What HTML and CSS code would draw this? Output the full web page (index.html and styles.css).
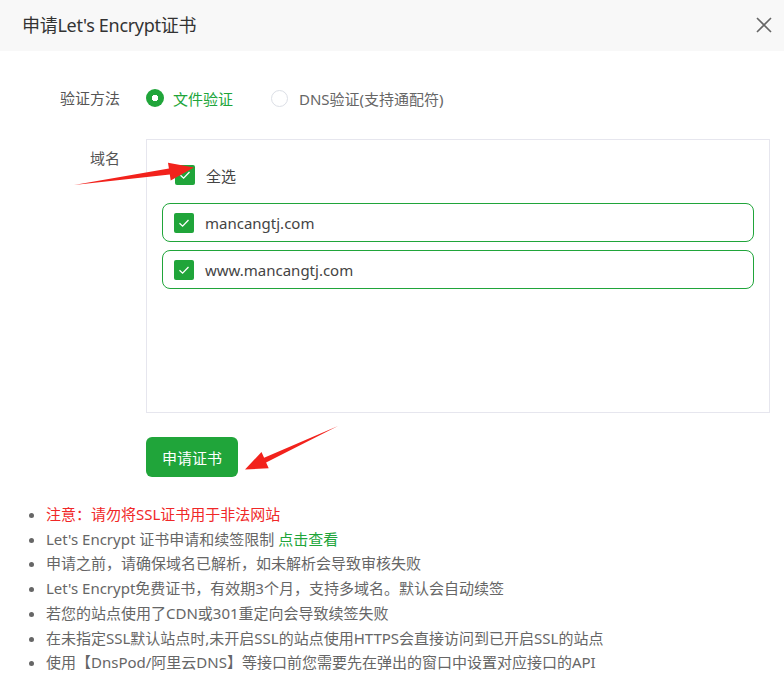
FILE: index.html
```html
<!DOCTYPE html>
<html>
    <head>
        <title>申请Let's Encrypt证书</title>
        <meta charset="UTF-8"/>
        <link rel="stylesheet" href="styles.css">
    </head>
    <body>
        <div class="dlg">
            <div class="dlg-head">
                <span class="dlg-title">申请Let's Encrypt证书</span>
                <svg class="dlg-close" width="16" height="16" viewBox="0 0 16 16">
                    <path d="M1 1 L15 15 M15 1 L1 15" stroke="#666" stroke-width="1.6" fill="none"/>
                </svg>
            </div>

            <div class="dlg-body">
                <div class="row">
                    <div class="row-label">验证方法</div>
                    <div class="row-ctrl radios">
                        <span class="radio on"><i></i>文件验证</span>
                        <span class="radio"><i></i>DNS验证(支持通配符)</span>
                    </div>
                </div>

                <div class="row row-domain">
                    <div class="row-label">域名</div>
                    <div class="row-ctrl">
                        <div class="domains">
                            <div class="dom-all">
                                <span class="chk"><svg width="20" height="20" viewBox="0 0 20 20"><path d="M5.5 10.2 L8.6 13.2 L14.5 7" stroke="#fff" stroke-width="1.3" fill="none"/></svg></span>
                                全选
                            </div>
                            <div class="dom-item">
                                <span class="chk"><svg width="20" height="20" viewBox="0 0 20 20"><path d="M5.5 10.2 L8.6 13.2 L14.5 7" stroke="#fff" stroke-width="1.3" fill="none"/></svg></span>
                                mancangtj.com
                            </div>
                            <div class="dom-item">
                                <span class="chk"><svg width="20" height="20" viewBox="0 0 20 20"><path d="M5.5 10.2 L8.6 13.2 L14.5 7" stroke="#fff" stroke-width="1.3" fill="none"/></svg></span>
                                www.mancangtj.com
                            </div>
                        </div>
                    </div>
                </div>

                <div class="row row-btn">
                    <div class="row-label"></div>
                    <div class="row-ctrl">
                        <button class="btn-green">申请证书</button>
                    </div>
                </div>

                <ul class="tips">
                    <li class="warn">注意：请勿将SSL证书用于非法网站</li>
                    <li>Let's Encrypt 证书申请和续签限制 <a href="#">点击查看</a></li>
                    <li>申请之前，请确保域名已解析，如未解析会导致审核失败</li>
                    <li>Let's Encrypt免费证书，有效期3个月，支持多域名。默认会自动续签</li>
                    <li>若您的站点使用了CDN或301重定向会导致续签失败</li>
                    <li>在未指定SSL默认站点时,未开启SSL的站点使用HTTPS会直接访问到已开启SSL的站点</li>
                    <li>使用【DnsPod/阿里云DNS】等接口前您需要先在弹出的窗口中设置对应接口的API</li>
                </ul>
            </div>

            <!-- annotation arrows drawn on top of the dialog -->
            <svg class="marks" width="784" height="697" viewBox="0 0 784 697">
                <polygon fill="#f2221c" points="74,185 168.9,168.6 168,162.7 194,167.5 170.7,180.5 169.8,174.6"/>
                <polygon fill="#f2221c" points="338,426 264.1,457.8 261.5,451.9 245,469.5 268.7,468.3 266.1,462.4"/>
            </svg>
        </div>
    </body>
</html>
```

FILE: styles.css
```css
body{
    margin: 0;
    background: #fff;
    font-family: "Noto Sans", "Noto Sans CJK SC", sans-serif;
    font-size: 15px;
    color: #666;
}

.dlg{
    position: relative;
    width: 784px;
    height: 697px;
    overflow: hidden;
}

.dlg-head{
    height: 51px;
    background: #f8f8f8;
    display: flex;
    align-items: center;
    justify-content: space-between;
    padding: 0 12px 0 22px;
}
.dlg-title{
    font-size: 18px;
    color: #333;
    letter-spacing: -0.3px;
    margin-top: -3px;
}
.dlg-close{
    margin-top: -2px;
}

.dlg-body{
    padding-top: 30px;
}

.row{
    display: flex;
}
.row-label{
    width: 120px;
    flex: none;
    text-align: right;
    padding-right: 26px;
    color: #555;
    line-height: 34px;
}
.row-ctrl{
    flex: none;
    width: 624px;
}

.radios{
    display: flex;
    align-items: center;
    height: 34px;
}
.radio{
    display: inline-flex;
    align-items: center;
    gap: 11px;
    margin-right: 38px;
    color: #666;
}
.radio i{
    width: 15px;
    height: 15px;
    border: 1px solid #dcdfe6;
    border-radius: 50%;
    box-sizing: content-box;
}
.radio.on{
    color: #20a53a;
    gap: 9px;
}
.radio.on i{
    width: 18px;
    height: 18px;
    border: none;
    background: #20a53a radial-gradient(circle, #fff 0 3px, transparent 3.5px);
}

.row-domain{
    margin-top: 24px;
}
.row-domain .row-label{
    line-height: 20px;
    padding-top: 9px;
}
.domains{
    height: 274px;
    box-sizing: border-box;
    border: 1px solid #e6e6ee;
    padding: 15px;
}
.dom-all,
.dom-item{
    display: flex;
    align-items: center;
    gap: 11px;
    color: #444;
}
.dom-all{
    height: 40px;
    padding-left: 13px;
    margin-bottom: 8px;
}
.dom-item{
    height: 39px;
    box-sizing: border-box;
    border: 1px solid #20a53a;
    border-radius: 8px;
    padding-left: 11px;
    margin-bottom: 8px;
}
.chk{
    width: 20px;
    height: 20px;
    border-radius: 2px;
    background: #20a53a;
    display: block;
}
.chk svg{
    display: block;
}

.row-btn{
    margin-top: 24px;
}
.btn-green{
    width: 92px;
    height: 40px;
    border: none;
    border-radius: 6px;
    background: #20a53a;
    color: #fff;
    font-family: inherit;
    font-size: 15px;
    padding: 0;
}

.tips{
    margin: 25px 0 0 0;
    padding-left: 46px;
    line-height: 24.7px;
    color: #666;
}
.tips li::marker{
    color: #666;
}
.tips .warn{
    color: #f02828;
}
.tips a{
    color: #20a53a;
    text-decoration: none;
}

.marks{
    position: absolute;
    left: 0;
    top: 0;
    pointer-events: none;
}
```
